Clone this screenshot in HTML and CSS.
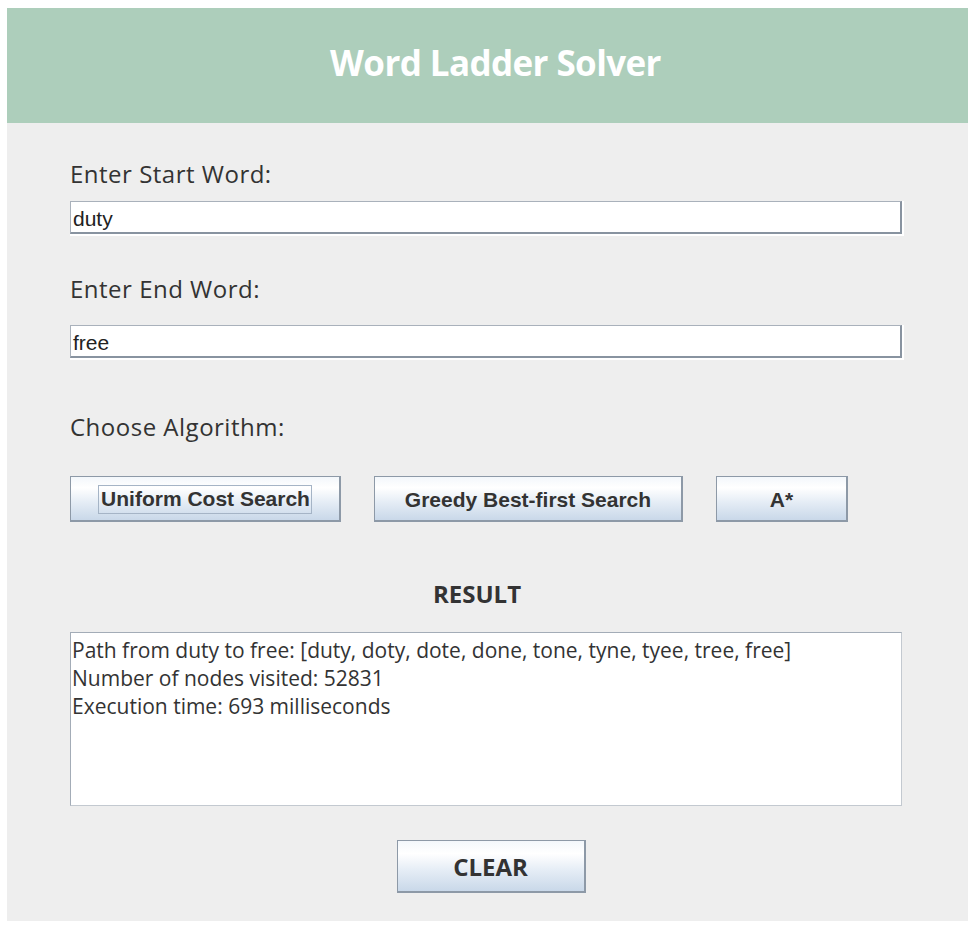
FILE: index.html
```html
<!DOCTYPE html>
<html>
<head>
<meta charset="utf-8">
<link rel="stylesheet" href="styles.css">
<title>Word Ladder Solver</title>
</head>
<body>
<div class="app">
  <header class="header"><h1 class="title">Word Ladder Solver</h1></header>
  <main class="content">
    <label class="label label-first">Enter Start Word:</label>
    <div class="field">duty</div>
    <label class="label label-second">Enter End Word:</label>
    <div class="field">free</div>
    <label class="label label-third">Choose Algorithm:</label>
    <div class="buttons">
      <button class="btn btn-ucs"><span class="focus">Uniform Cost Search</span></button>
      <button class="btn btn-gbfs">Greedy Best-first Search</button>
      <button class="btn btn-astar">A*</button>
    </div>
    <h2 class="result-title">RESULT</h2>
    <div class="result">
      <div>Path from duty to free: [duty, doty, dote, done, tone, tyne, tyee, tree, free]</div>
      <div>Number of nodes visited: 52831</div>
      <div>Execution time: 693 milliseconds</div>
    </div>
    <div class="clear-row"><button class="btn-clear">CLEAR</button></div>
  </main>
</div>
</body>
</html>
```

FILE: styles.css
```css
html, body { background: #ffffff; }
body {
  margin: 8px 6px 0 7px;
}
.app {
  width: 961px;
  height: 913px;
  background: #eeeeee;
  display: flex;
  flex-direction: column;
}
.header {
  height: 115px;
  background: #adcebb;
  display: flex;
  align-items: center;
  justify-content: center;
}
.title {
  margin: 0;
  font-family: "Open Sans", sans-serif;
  font-weight: 700;
  font-size: 35px;
  color: #ffffff;
  letter-spacing: -0.6px;
  padding-bottom: 6px;
  padding-left: 16px;
}
.content {
  padding: 0 66px 0 63px;
  display: flex;
  flex-direction: column;
}
.label {
  display: block;
  font-family: "Open Sans", sans-serif;
  font-size: 24px;
  line-height: 30px;
  color: #333333;
  letter-spacing: 0.5px;
}
.label-first { margin-top: 36px; }
.label-second { margin-top: 40px; }
.label-third { margin-top: 54px; }
.field {
  box-sizing: border-box;
  height: 33px;
  margin-top: 12px;
  background: #ffffff;
  border-top: 1px solid #a9b1bb;
  border-left: 1px solid #a9b1bb;
  border-right: 2px solid #8893a0;
  border-bottom: 2px solid #8893a0;
  box-shadow: 1px 1px 0 1px #ffffff;
  font-family: "Liberation Sans", Arial, sans-serif;
  font-size: 21px;
  line-height: 34px;
  padding-left: 2px;
  color: #222222;
}
.label-second + .field { margin-top: 21px; }
.buttons {
  display: flex;
  gap: 33px;
  margin-top: 34px;
}
.btn {
  box-sizing: border-box;
  height: 46px;
  border: 1px solid #8d99a7;
  border-bottom-width: 2px;
  border-right-width: 2px;
  background: linear-gradient(to bottom, #f3f7fb 0%, #ffffff 25%, #e4ecf5 60%, #c9d8e9 100%);
  font-family: "Liberation Sans", Arial, sans-serif;
  font-weight: 700;
  font-size: 21px;
  color: #333333;
  padding: 2px 0 0 0;
  display: flex;
  align-items: center;
  justify-content: center;
}
.btn-ucs { width: 271px; }
.btn-gbfs { width: 309px; }
.btn-astar { width: 132px; }
.focus {
  border: 1px solid #a5b4c6;
  padding: 2px 1px 3px 2px;
  line-height: 22px;
}
.result-title {
  margin: 57px 0 0 0;
  font-family: "Open Sans", sans-serif;
  font-weight: 700;
  font-size: 24px;
  line-height: 30px;
  text-align: center;
  color: #333333;
  padding-right: 18px;
}
.result {
  box-sizing: border-box;
  height: 174px;
  margin-top: 23px;
  background: #ffffff;
  border: 1px solid #a3acb7;
  border-right-color: #c3c9d0;
  border-bottom-color: #c3c9d0;
  padding: 3px 1px;
  font-family: "Open Sans", sans-serif;
  font-size: 21px;
  line-height: 28px;
  color: #333333;
}
.clear-row {
  display: flex;
  justify-content: center;
  margin-top: 34px;
  padding-left: 10px;
}
.btn-clear {
  box-sizing: border-box;
  width: 189px;
  height: 53px;
  border: 1px solid #8d99a7;
  border-bottom-width: 2px;
  border-right-width: 2px;
  background: linear-gradient(to bottom, #f3f7fb 0%, #ffffff 25%, #e4ecf5 60%, #c9d8e9 100%);
  font-family: "Open Sans", sans-serif;
  font-weight: 700;
  font-size: 24px;
  color: #333333;
  padding: 0;
}
```
